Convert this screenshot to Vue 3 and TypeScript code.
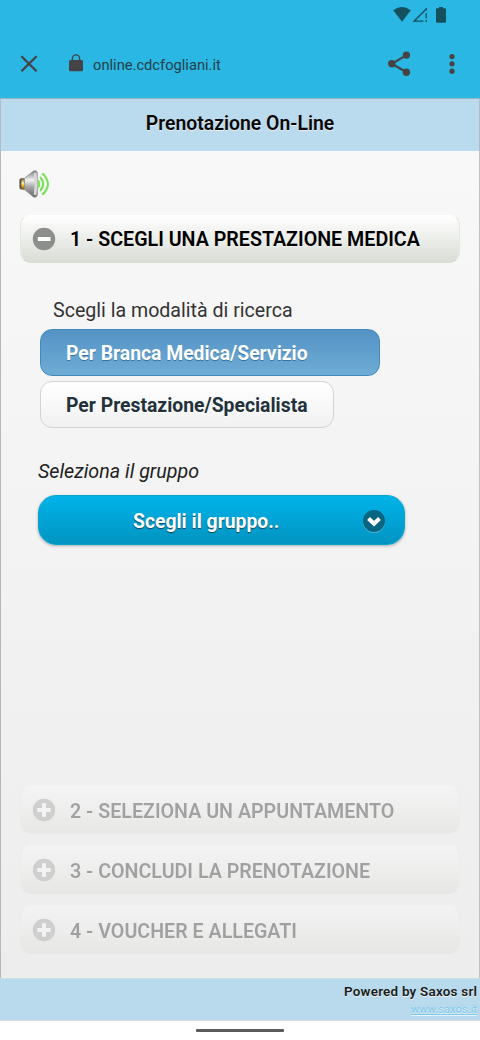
<script setup lang="ts">
interface Step {
  id: number
  label: string
}

const laterSteps: Step[] = [
  { id: 2, label: '2 - SELEZIONA UN APPUNTAMENTO' },
  { id: 3, label: '3 - CONCLUDI LA PRENOTAZIONE' },
  { id: 4, label: '4 - VOUCHER E ALLEGATI' },
]
</script>

<template>
  <div class="screen">
    <div class="chrome">
      <div class="status">
        <svg class="wifi" width="18" height="15" viewBox="0 0 18 15">
          <path d="M.2 3.2Q9-3 17.8 3.2L9 14.8Z" fill="#15505f" />
        </svg>
        <svg class="signal" width="17" height="16" viewBox="0 0 17 16">
          <path d="M11.5 14.2H2L14.2 2M14.2 1V3.5M14.2 6V11.5M14.2 13V15" fill="none" stroke="#15505f" stroke-width="1.3" />
        </svg>
        <svg class="battery" width="10" height="16" viewBox="0 0 10 16">
          <path d="M3 0H7V1.2H9Q10 1.2 10 2.2V14.8Q10 15.8 9 15.8H1Q0 15.8 0 14.8V2.2Q0 1.2 1 1.2H3Z" fill="#15505f" />
        </svg>
      </div>
      <div class="toolbar">
        <svg class="close" width="18" height="18" viewBox="0 0 18 18">
          <path d="M1.4 1.2L16.6 16.2M16.6 1.2L1.4 16.2" stroke="#444346" stroke-width="2.3" fill="none" />
        </svg>
        <svg class="lock" width="14" height="18" viewBox="0 0 14 18">
          <path d="M3.4 7V4.5a3.6 3.6 0 0 1 7.2 0V7" fill="none" stroke="#444346" stroke-width="1.4" />
          <rect x="0" y="6" width="14" height="11.3" rx="1.5" fill="#444346" />
        </svg>
        <span class="url">online.cdcfogliani.it</span>
        <svg class="share" width="24" height="26" viewBox="0 0 24 26">
          <path d="M18.5 4.1L3.8 12.7L18.5 21.2" fill="none" stroke="#444346" stroke-width="2.2" />
          <circle cx="18.4" cy="4.1" r="3.7" fill="#444346" />
          <circle cx="3.8" cy="12.7" r="3.7" fill="#444346" />
          <circle cx="18.4" cy="21.2" r="3.7" fill="#444346" />
        </svg>
        <svg class="more" width="6" height="20" viewBox="0 0 6 20">
          <circle cx="3" cy="2.6" r="2.6" fill="#444346" />
          <circle cx="3" cy="9.8" r="2.6" fill="#444346" />
          <circle cx="3" cy="17.2" r="2.6" fill="#444346" />
        </svg>
      </div>
    </div>

    <header class="title"><h1>Prenotazione On-Line</h1></header>

    <main class="content">
      <svg class="speaker" width="32" height="30" viewBox="0 0 32 30">
        <defs>
          <linearGradient id="cone" x1="0" y1="0" x2="0" y2="1">
            <stop offset="0" stop-color="#777" />
            <stop offset=".35" stop-color="#f2f2f2" />
            <stop offset=".6" stop-color="#aaa" />
            <stop offset="1" stop-color="#656565" />
          </linearGradient>
          <linearGradient id="brass" x1="0" y1="0" x2="0" y2="1">
            <stop offset="0" stop-color="#8d6930" />
            <stop offset=".4" stop-color="#fff0b2" />
            <stop offset=".65" stop-color="#f4b313" />
            <stop offset="1" stop-color="#765018" />
          </linearGradient>
        </defs>
        <path d="M.4 10Q.4 8.3 2.4 8.3H6V19.5H2.4Q.4 19.5 .4 17Z" fill="#59544c" />
        <path d="M2.4 9H6V19.2H2.4Z" fill="url(#brass)" />
        <path d="M5.5 8.3L14.6 1Q17.6-.2 18.3 2.5V25Q17.6 28 14.6 27L5.5 19.5Z" fill="url(#cone)" stroke="#8c8c8c" stroke-width=".8" />
        <path d="M16.1 2.7Q17.8 14 16.1 25" fill="none" stroke="#d8d8d8" stroke-width="2.6" />
        <path d="M18.9 10.3Q21.7 14 18.9 17.8" fill="none" stroke="#7ee65b" stroke-width="2.1" />
        <path d="M21.2 6.8Q27.2 14 21.2 21" fill="none" stroke="#70e34d" stroke-width="2.1" />
        <path d="M23.3 3.2Q34.5 14 23.3 24.8" fill="none" stroke="#78e158" stroke-width="2.2" />
      </svg>

      <section class="step">
        <svg class="badge" width="24" height="24" viewBox="0 0 24 24">
          <circle cx="12" cy="12" r="11.2" fill="#8d8f8c" />
          <rect x="5.8" y="10" width="12.7" height="4" fill="#fff" />
        </svg>
        <span class="step-label">1 - SCEGLI UNA PRESTAZIONE MEDICA</span>
      </section>

      <form class="choices" @submit.prevent>
        <p class="mode">Scegli la modalità di ricerca</p>
        <button class="option chosen" type="button"><span>Per Branca Medica/Servizio</span></button>
        <button class="option plain" type="button"><span>Per Prestazione/Specialista</span></button>
        <p class="group">Seleziona il gruppo</p>
        <button class="picker" type="button">
          <span>Scegli il gruppo..</span>
          <svg class="arrow" width="24" height="25" viewBox="0 0 24 25">
            <circle cx="12" cy="13" r="11" fill="#48b6d6" />
            <circle cx="12" cy="12" r="11" fill="#066580" />
            <path d="M6.5 9.6L12 14.8L17.5 9.6" fill="none" stroke="#fff" stroke-width="4.1" />
          </svg>
        </button>
      </form>

      <div class="later">
        <section v-for="step in laterSteps" :key="step.id" class="step disabled">
          <svg class="badge" width="24" height="24" viewBox="0 0 24 24">
            <circle cx="12" cy="12" r="11.2" fill="#8d8f8c" />
            <path d="M12 5.3V18.7M5.3 12H18.7" stroke="#fff" stroke-width="4" />
          </svg>
          <span class="step-label">{{ step.label }}</span>
        </section>
      </div>
    </main>

    <footer class="footer">
      <div class="powered">Powered by Saxos srl</div>
      <a class="site">www.saxos.it</a>
    </footer>
    <div class="navbar"><div class="handle"></div></div>
  </div>
</template>

<style>
body { margin: 0; overflow: hidden; }
</style>

<style scoped>
.screen {
  width: 480px; height: 1040px; display: flex; flex-direction: column;
  font-family: Roboto, "Liberation Sans", sans-serif; overflow: hidden; background: #fff;
}
.screen * { box-sizing: border-box; }
svg { display: block; flex: none; }
.chrome { height: 98px; background: #2ab7e3; flex: none; }
.status { height: 30px; display: flex; justify-content: flex-end; align-items: flex-start; padding: 7px 34px 0 0; }
.signal { margin-left: 1px; margin-right: 7px; }
.toolbar { height: 67px; display: flex; align-items: center; padding: 0 25px 0 20px; }
.lock { margin-left: 31px; margin-bottom: 1px; }
.url { margin-left: 10px; font-size: 14.7px; line-height: 20px; color: #263f49; white-space: nowrap; margin-top: 2px; }
.share { margin-left: auto; }
.more { margin-left: 37px; }
.title {
  height: 53px; flex: none; background: #badaed; border-top: 1px solid #9db5c3;
  border-left: 1px solid #b0bdc6; border-right: 1px solid #b0bdc6; text-align: center;
}
.title h1 { margin: 0; padding-top: 13px; font-size: 19.4px; line-height: 24px; font-weight: 600; color: #080808; text-shadow: 0 1px 0 #eee; }
.content {
  height: 827px; flex: none; display: flex; flex-direction: column; padding: 19px 19px 24px;
  background: linear-gradient(#f8f8f8, #ededed); border-left: 1px solid #b6b6b6; border-right: 1px solid #c1c1c1;
}
.speaker { margin-left: -1px; }
.step {
  height: 49px; flex: none; border-radius: 11px; border: 1px solid #e4e9df; border-top-color: #f7f7f4; border-bottom-color: #d5ddd0;
  background: linear-gradient(#fff, #d9ddd5); display: flex; align-items: center; padding-left: 11px;
}
.speaker + .step { margin-top: 14px; }
.step-label { margin-left: 14px; padding-top: 2px; font-size: 19.67px; line-height: 24px; font-weight: 600; color: #000; text-shadow: 0 1px 0 #eee; white-space: nowrap; }
.choices { display: flex; flex-direction: column; align-items: flex-start; }
p { margin: 0; line-height: 24px; font-size: 19.6px; color: #333; white-space: nowrap; }
.mode { margin: 36px 0 0 33px; }
button { font-family: inherit; font-size: 19.5px; line-height: 24px; text-align: left; white-space: nowrap; }
.option { height: 47px; border-radius: 12px; margin-left: 20px; padding: 2px 25px 0; font-size: 19.35px; }
.chosen { width: 340px; margin-top: 6px; color: #fff; font-weight: 700; border: 1px solid #438abb; background: linear-gradient(#5393c5, #6facd5); text-shadow: 0 1px 0 #3373a5; }
.plain { width: 294px; margin-top: 5px; color: #22313a; font-weight: 700; border: 1px solid #d3d3d3; background: linear-gradient(#fff, #f1f1f1); text-shadow: 0 1px 0 #fff; }
.group { margin: 32px 0 0 18px; font-size: 19.7px; font-style: italic; color: #222; }
.picker {
  width: 367px; height: 50px; margin: 11px 0 0 18px; border: 1px solid #0ba3cd; border-radius: 18px;
  background: linear-gradient(#00b3e9, #0294c1); box-shadow: 0 1px 3px rgb(0 0 0 / 30%);
  color: #fff; font-weight: 700; font-size: 19.35px; text-shadow: 0 1px 1px #044254; display: flex; align-items: center; justify-content: space-between; padding: 3px 18px 0 94px;
}
.later { margin-top: auto; display: flex; flex-direction: column; gap: 11px; }
.disabled { opacity: .32; }
.disabled .badge { margin-top: 1px; }
.disabled .step-label { padding-top: 4px; }
.footer { height: 43px; flex: none; background: #b9daed; border-top: 1px solid #cadde7; border-bottom: 1px solid #d8dce0; padding: 5px 3px 0 0; text-align: right; }
.powered { font-size: 13.4px; line-height: 16px; font-weight: 600; letter-spacing: .25px; margin-right: -.25px; color: #171d20; text-shadow: 0 1px 0 #eee; }
.site { display: block; font-size: 11.2px; line-height: 16px; margin-top: 2px; color: #7bc9ed; text-decoration: underline; text-shadow: 0 1px 0 #e8f2f7; }
.navbar { flex: 1; background: #fff; padding-top: 8px; }
.handle { width: 88px; height: 3px; margin: 0 auto; background: #5d5a5b; border-radius: 1px; }
</style>
